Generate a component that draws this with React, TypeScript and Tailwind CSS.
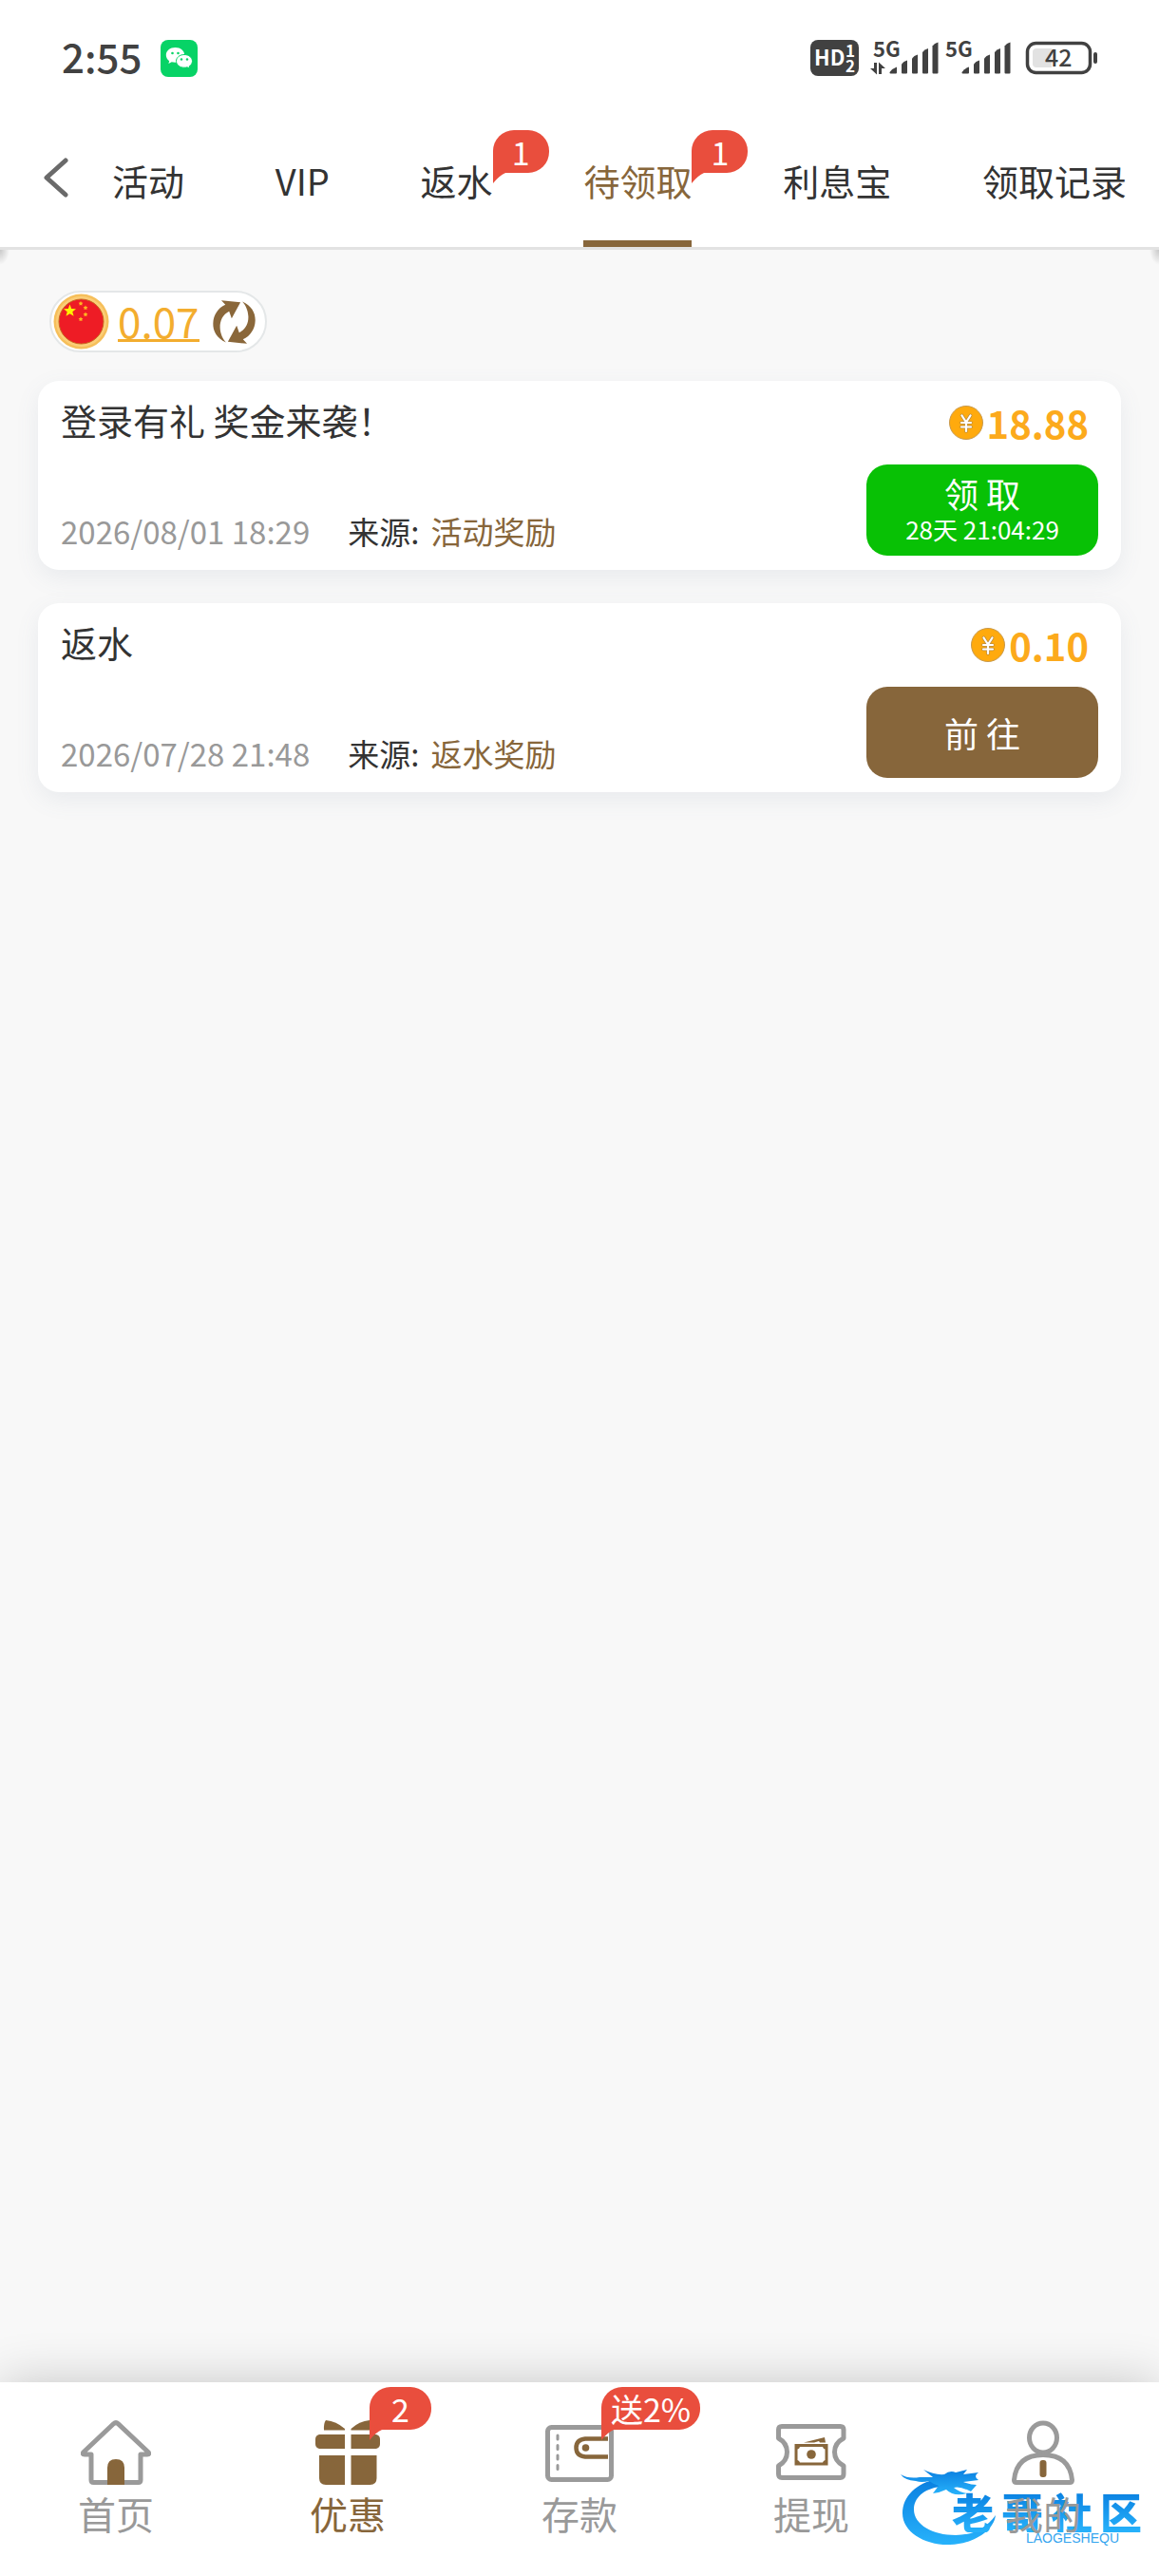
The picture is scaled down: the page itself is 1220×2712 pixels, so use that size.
import { FC, ReactNode } from "react";

interface BubbleProps {
  label: string;
  className: string;
}

// Red count bubble with a small tail at its lower left corner
const Bubble: FC<BubbleProps> = ({ label, className }) => (
  <span
    className={`absolute z-10 flex h-[45px] items-center justify-center rounded-[22px] rounded-bl-none bg-[#e94e3d] text-[34px] leading-[44px] font-normal whitespace-nowrap text-white ${className}`}
  >
    {label}
    <svg
      viewBox="0 0 16 12"
      className="absolute top-full left-0 h-3 w-4"
      aria-hidden="true"
    >
      <path d="M0 -1H16Q8 1 0 11Z" fill="#e94e3d" />
    </svg>
  </span>
);

const WechatIcon = () => (
  <svg viewBox="0 0 39 39" className="h-[39px] w-[39px]" aria-hidden="true">
    <rect width="39" height="39" rx="8" fill="#07d366" />
    <path
      d="M15.500 8C10 8 5.800 11.500 5.800 16c0 2.500 1.300 4.700 3.400 6.200L8.400 25l3.300-1.700c1.200.3 2.500.5 3.800.5 5.400 0 9.700-3.500 9.700-7.900S21 8 15.500 8Z"
      fill="#fff"
    />
    <path
      d="M25 15.500c-4.800 0-8.500 3-8.500 6.900s3.700 6.800 8.500 6.800c1.100 0 2.100-.1 3.100-.4l2.700 1.500-.7-2.400c2.100-1.300 3.400-3.300 3.400-5.500 0-3.900-3.800-6.900-8.500-6.900Z"
      fill="#fff"
      stroke="#07d366"
      strokeWidth="1"
    />
    <g fill="#07d366">
      <circle cx="12.500" cy="14" r="1.300" />
      <circle cx="18.500" cy="14" r="1.300" />
      <circle cx="22" cy="20.500" r="1.200" />
      <circle cx="28" cy="20.500" r="1.200" />
    </g>
  </svg>
);

const HdIcon = () => (
  <svg
    viewBox="0 0 51 38"
    className="h-[38px] w-[51px] overflow-visible font-['Noto_Sans_CJK_SC',sans-serif]"
    aria-hidden="true"
  >
    <rect width="51" height="38" rx="8" fill="#414141" />
    <g fill="#fff" fontWeight="700">
      <text x="4" y="27" fontSize="22">
        HD
      </text>
      <text x="37" y="18" fontSize="17">
        1
      </text>
      <text x="37" y="34" fontSize="17">
        2
      </text>
    </g>
  </svg>
);

const SignalIcon: FC<{ arrows?: boolean }> = ({ arrows }) => (
  <svg
    viewBox="0 0 72 38"
    className="h-[38px] w-[72px] overflow-visible font-['Noto_Sans_CJK_SC',sans-serif]"
    fill="#414141"
    aria-hidden="true"
  >
    <text x="3" y="18" fontSize="22" fontWeight="700">
      5G
    </text>
    {arrows && <path d="M4 24v6H0l7 6.500V24ZM9 36V23.500l7 6.500h-4v6Z" />}
    <path d="M20.500 34q3-4 7.500-5.500V34.500q0 1-1 1h-5.500q-1 0-1-1Z" />
    <path d="M33 25.500q2-3 6-4v13q0 1-1 1h-4q-1 0-1-1Z" />
    <path d="M44 19.500q2-3 6-4v19q0 1-1 1h-4q-1 0-1-1Z" />
    <path d="M55 13q2-3 6-4v25.500q0 1-1 1h-4q-1 0-1-1Z" />
    <path d="M65.500 6.500q2-3 6-4v32q0 1-1 1h-4q-1 0-1-1Z" />
  </svg>
);

const BatteryIcon = () => (
  <svg
    viewBox="0 0 76 34"
    className="h-[34px] w-[76px] overflow-visible font-['Noto_Sans_CJK_SC',sans-serif]"
    aria-hidden="true"
  >
    <rect
      x="1.500"
      y="1.500"
      width="66"
      height="31"
      rx="9"
      fill="#fff"
      stroke="#414141"
      strokeWidth="3.500"
    />
    <path d="M11 7h16v20H11q-4 0-4-4V11q0-4 4-4Z" fill="#e2e2e2" />
    <rect x="71" y="11" width="4" height="12" rx="2" fill="#414141" />
    <text x="20" y="26" fontSize="25" fontWeight="500" fill="#414141">
      42
    </text>
  </svg>
);

const FlagIcon = () => (
  <svg viewBox="0 0 59 59" className="h-[59px] w-[59px]" aria-hidden="true">
    <circle cx="29.500" cy="29.500" r="29" fill="#f6bf5a" />
    <circle cx="29.500" cy="29.500" r="26.500" fill="#fbce78" />
    <circle
      cx="29.500"
      cy="29.500"
      r="23.500"
      fill="#ee1c25"
      stroke="#c9671f"
      strokeWidth="1"
    />
    <path
      d="M17.500 11.500l1.700 4.400 4.800.3-3.700 3 1.300 4.600-4.100-2.600-4 2.600 1.200-4.600-3.700-3 4.800-.3Z"
      fill="#fff200"
    />
    <g fill="#ffb920">
      <path d="M29 8l.8 1.400 1.600.3-1.100 1.200.2 1.700-1.500-.7-1.500.7.200-1.700-1.100-1.200 1.600-.3Z" />
      <path d="M34 12.500l.8 1.400 1.600.3-1.100 1.200.2 1.700-1.500-.7-1.500.7.200-1.700-1.100-1.200 1.600-.3Z" />
      <path d="M34 19.500l.8 1.400 1.600.3-1.100 1.200.2 1.700-1.500-.7-1.500.7.200-1.700-1.100-1.200 1.600-.3Z" />
      <path d="M29 24.500l.8 1.400 1.600.3-1.100 1.200.2 1.700-1.500-.7-1.500.7.200-1.700-1.100-1.200 1.600-.3Z" />
    </g>
  </svg>
);

const RefreshIcon = () => (
  <svg
    viewBox="0 0 136 144"
    className="h-12 w-[45px]"
    fill="#8a673a"
    aria-hidden="true"
  >
    <path d="M42 137C12 124 0 100 1 76C2 50 16 28 40 17L27 3L88 9L60 61L52 38C32 48 22 68 23 90C24 110 32 126 42 137Z" />
    <path d="M94 7C124 20 136 44 135 68C134 94 120 116 96 127L109 141L48 135L76 83L84 106C104 96 114 76 113 54C112 34 104 18 94 7Z" />
  </svg>
);

const CoinIcon = () => (
  <svg
    viewBox="0 0 36 36"
    className="h-9 w-9"
    aria-hidden="true"
    fill="none"
    strokeLinecap="round"
  >
    <circle cx="18" cy="18" r="17.500" fill="#ffaa0d" stroke="#c7994e" />
    <path
      d="M13.500 10.500L18 17.500L22.500 10.500M18 17.500V27M13 18H23M13 22.500H23"
      stroke="#b98a3e"
      strokeWidth="3.600"
    />
    <path
      d="M13.500 10.500L18 17.500L22.500 10.500M18 17.500V27M13 18H23M13 22.500H23"
      stroke="#fff"
      strokeWidth="2.200"
    />
  </svg>
);

const HomeIcon = () => (
  <svg viewBox="0 0 74 68" className="h-[68px] w-[74px]" aria-hidden="true">
    <path
      d="M34.500 3.800Q37 1.500 39.500 3.800L71 33.500Q73 36 70 36H63V63Q63 65.500 60.500 65.500H13.500Q11 65.500 11 63V36H4Q1 36 3 33.500Z"
      fill="#fff"
      stroke="#9a9a9a"
      strokeWidth="5"
      strokeLinejoin="round"
    />
    <path d="M28 68V50Q28 41 37 41T46 50V68Z" fill="#87663b" />
  </svg>
);

const GiftIcon = () => (
  <svg
    viewBox="0 0 68 68"
    className="h-[68px] w-[68px]"
    fill="#87663b"
    aria-hidden="true"
  >
    <path d="M9 10.500Q8.500 3 11 0Q22 1 31 9V10.500Z" />
    <path d="M59 10.500Q59.500 3 57 0Q46 1 37.500 9V10.500Z" />
    <path d="M4 15H31V30H4Q0 29 0 25V20Q0 16 4 15Z" />
    <path d="M37.500 15H64Q68 16 68 20V25Q68 29 64 30H37.500Z" />
    <path d="M4 37H31V68H11Q4 68 4 61Z" />
    <path d="M37.500 37H64.500V61Q64.500 68 57.500 68H37.500Z" />
  </svg>
);

const WalletIcon = () => (
  <svg
    viewBox="0 0 72 68"
    className="h-[68px] w-[72px]"
    fill="none"
    aria-hidden="true"
  >
    <rect
      x="2.500"
      y="7.500"
      width="67"
      height="55"
      rx="4"
      stroke="#9a9a9a"
      strokeWidth="5"
    />
    <path
      d="M13 16V20M13 26.500V30.500M13 37V41M13 47.500V51.500"
      stroke="#9a9a9a"
      strokeWidth="3"
      strokeLinecap="round"
    />
    <path
      d="M66 19.500H42Q32.500 20.500 32.500 29T42 38.500H66"
      stroke="#87663b"
      strokeWidth="4.500"
    />
    <circle cx="42.500" cy="29" r="3.800" fill="#87663b" />
  </svg>
);

const TicketIcon = () => (
  <svg
    viewBox="0 0 74 68"
    className="h-[68px] w-[74px]"
    fill="none"
    aria-hidden="true"
  >
    <path
      d="M2.500 19V10Q2.500 6.500 6 6.500H67.500Q71 6.500 71 10V19Q61.500 24 61.500 33.500T71 48V56.500Q71 60.500 67.500 60.500H6Q2.500 60.500 2.500 56.500V48Q11.500 43 11.500 33.500T2.500 19Z"
      stroke="#9a9a9a"
      strokeWidth="5"
      strokeLinejoin="round"
    />
    <path d="M29 23.500L51 18L52 23.500H46L45 22L40 23.500Z" fill="#87663b" />
    <path
      fillRule="evenodd"
      d="M19.500 25H54.500V47.500H19.500ZM25 28Q24.500 30 22.500 30.500V42Q24.500 42.500 25 44.500H49Q49.500 42.500 51.500 42V30.500Q49.500 30 49 28Z"
      fill="#87663b"
    />
    <circle cx="37" cy="36" r="4.800" fill="#87663b" />
  </svg>
);

const UserIcon = () => (
  <svg
    viewBox="0 0 66 68"
    className="h-[68px] w-[66px]"
    fill="none"
    aria-hidden="true"
  >
    <ellipse
      cx="33"
      cy="18.500"
      rx="14.500"
      ry="15.500"
      stroke="#9a9a9a"
      strokeWidth="5"
    />
    <path
      d="M5 65.500Q2.500 65.500 2.500 63Q5 36.500 33 36.500T63.500 63Q63.500 65.500 61 65.500Z"
      stroke="#9a9a9a"
      strokeWidth="5"
      strokeLinejoin="round"
    />
    <rect x="29.500" y="42" width="7" height="18" rx="3" fill="#87663b" />
  </svg>
);

const DragonMark = () => (
  <svg
    viewBox="0 0 104 86"
    className="absolute top-0 left-0 h-[86px] w-[104px]"
    aria-hidden="true"
  >
    <defs>
      <linearGradient id="dragon" x1="0" y1="0" x2="0" y2="1">
        <stop offset="0" stopColor="#0a7fe0" />
        <stop offset="1" stopColor="#27b2fb" />
      </linearGradient>
    </defs>
    <g fill="url(#dragon)">
      <path d="M38 14C17 18 2 32 2 50C2 70 26 84 52 83C78 82 98 68 100 52C90 66 76 73 58 73C34 73 14 62 14 46C14 34 24 24 42 22Z" />
      <path d="M0 9Q8 14 20 12L34 12L24 4Q36 10 46 9Q52 4 58 7L70 4L66 9L82 7Q76 11 82 15L66 17Q74 20 80 20L74 27Q62 21 56 23Q62 28 70 29Q56 33 48 25Q42 28 34 29L40 21Q34 19 30 16Q22 18 16 16Q4 15 0 9Z" />
    </g>
  </svg>
);

// Community logo, lies behind the icons and labels of the bottom bar
const Watermark = () => (
  <div className="absolute top-[88px] right-[18px] h-[90px] w-[254px]">
    <DragonMark />
    <div className="relative flex flex-col items-end pt-[26px]">
      <span className="flex gap-2 text-[44px] leading-[44px] font-black">
        {["老", "哥", "社", "区"].map((char) => (
          <span
            key={char}
            className="bg-gradient-to-b from-[#0a7fe0] to-[#27b2fb] bg-clip-text text-transparent"
          >
            {char}
          </span>
        ))}
      </span>
      <span className="pr-6 font-['Liberation_Sans',sans-serif] text-sm leading-3 text-[#35a5ef]">
        LAOGESHEQU
      </span>
    </div>
  </div>
);

const tabs = [
  { label: "活动" },
  { label: "VIP" },
  { label: "返水", count: "1" },
  { label: "待领取", count: "1", active: true },
  { label: "利息宝" },
  { label: "领取记录" },
];

const rewards = [
  {
    title: "登录有礼 奖金来袭！",
    time: "2026/08/01 18:29",
    source: "活动奖励",
    amount: "18.88",
    action: "领 取",
    countdown: "28天 21:04:29",
  },
  {
    title: "返水",
    time: "2026/07/28 21:48",
    source: "返水奖励",
    amount: "0.10",
    action: "前 往",
  },
];

interface NavItem {
  label: string;
  icon: ReactNode;
  active?: boolean;
  bubble?: string;
}

const navItems: NavItem[] = [
  { label: "首页", icon: <HomeIcon /> },
  { label: "优惠", icon: <GiftIcon />, active: true, bubble: "2" },
  { label: "存款", icon: <WalletIcon />, bubble: "送2%" },
  { label: "提现", icon: <TicketIcon /> },
  { label: "我的", icon: <UserIcon /> },
];

const StatusBar = () => (
  <div className="flex h-[122px] items-center justify-between pr-16 pl-[65px]">
    <div className="flex items-center gap-5">
      <span className="pb-1 text-[42px] leading-[42px] font-medium text-[#414141]">
        2:55
      </span>
      <WechatIcon />
    </div>
    <div className="flex items-center">
      <HdIcon />
      <div className="ml-3 flex gap-1">
        <SignalIcon arrows />
        <SignalIcon />
      </div>
      <div className="ml-4">
        <BatteryIcon />
      </div>
    </div>
  </div>
);

const TabBar = () => (
  <div className="flex h-[138px] items-stretch pr-[34px] pl-[34px]">
    <button type="button" aria-label="返回" className="w-[84px] pb-2 pl-3">
      <svg viewBox="0 0 26 42" className="h-[42px] w-[26px]" fill="none">
        <path
          d="M23 3L3 21L23 39"
          stroke="#6a6a6a"
          strokeWidth="5"
          strokeLinecap="round"
          strokeLinejoin="round"
        />
      </svg>
    </button>
    <nav className="flex flex-1 justify-between">
      {tabs.map((tab) => (
        <a
          key={tab.label}
          href="#"
          className={`relative flex items-center border-b-[7px] pt-1 text-[38px] whitespace-nowrap ${
            tab.active
              ? "border-b-[#87663b] text-[#87663b]"
              : "border-b-transparent text-[#333]"
          }`}
        >
          {tab.label}
          {tab.count && (
            <Bubble
              label={tab.count}
              className="top-[15px] left-full w-[59px]"
            />
          )}
        </a>
      ))}
    </nav>
  </div>
);

const RewardCard: FC<{ reward: (typeof rewards)[number] }> = ({ reward }) => (
  <li className="flex justify-between rounded-[22px] bg-white px-6 pt-5 pb-[15px] shadow-[0_8px_24px_rgba(100,120,150,0.1)]">
    <div className="flex flex-col justify-between">
      <h2 className="text-[38px] leading-[42px] text-[#333]">{reward.title}</h2>
      <p className="mb-1 flex items-center text-[33px] leading-[44px]">
        <time className="mr-10 text-[#999]">{reward.time}</time>
        <span className="mr-3 text-[#333]">来源:</span>
        <span className="text-[#87663b]">{reward.source}</span>
      </p>
    </div>
    <div className="flex flex-col">
      <div className="flex h-12 items-center justify-end gap-1 pr-[10px]">
        <CoinIcon />
        <span className="text-[40px] leading-[46px] font-bold text-[#fcaa1c]">
          {reward.amount}
        </span>
      </div>
      <button
        type="button"
        className={`mt-5 flex h-24 w-[244px] flex-col items-center justify-center rounded-[22px] text-white ${
          reward.countdown ? "bg-[#08c105]" : "bg-[#87663b]"
        }`}
      >
        <span className="text-[36px] leading-[40px]">{reward.action}</span>
        {reward.countdown && (
          <span className="text-[26px] leading-[36px]">{reward.countdown}</span>
        )}
      </button>
    </div>
  </li>
);

const BottomNav = () => (
  <nav className="relative flex bg-white shadow-[0_0_50px_rgba(0,0,0,0.2)]">
    <Watermark />
    {navItems.map((item) => (
      <a
        key={item.label}
        href="#"
        className={`relative flex flex-1 flex-col items-center gap-2 pt-10 pb-11 text-[40px] leading-[44px] ${
          item.active ? "text-[#87663b]" : "text-[#999]"
        }`}
      >
        {item.icon}
        {item.label}
        {item.bubble && (
          <Bubble
            label={item.bubble}
            className="top-[5px] left-1/2 ml-[23px] min-w-[65px] px-[10px]"
          />
        )}
      </a>
    ))}
  </nav>
);

export default function App() {
  return (
    <div className="flex min-h-screen flex-col overflow-hidden bg-[#f8f8f8] font-['Noto_Sans_CJK_SC',sans-serif]">
      <header className="relative border-b-[3px] border-[#e2e2e2] bg-white">
        <StatusBar />
        <TabBar />
        <span className="absolute top-full left-0 mt-[3px] h-4 w-[10px] bg-[radial-gradient(ellipse_at_top_left,#c8c8c8,transparent_70%)]" />
        <span className="absolute top-full right-0 mt-[3px] h-4 w-[10px] bg-[radial-gradient(ellipse_at_top_right,#c8c8c8,transparent_70%)]" />
      </header>
      <main className="flex-1 px-10 pt-[43px] pb-10">
        <div className="ml-3 flex h-[65px] w-fit items-center rounded-full border-2 border-[#e4e7e8] bg-white pr-[10px] pl-[2px]">
          <FlagIcon />
          <a
            href="#"
            className="mr-[14px] ml-[9px] border-b-[3px] border-[#f3ad2e] text-[44px] leading-[40px] text-[#f3ad2e]"
          >
            0.07
          </a>
          <button type="button" aria-label="刷新">
            <RefreshIcon />
          </button>
        </div>
        <ul className="mt-[30px] flex flex-col gap-[35px]">
          {rewards.map((reward) => (
            <RewardCard key={reward.time} reward={reward} />
          ))}
        </ul>
      </main>
      <BottomNav />
    </div>
  );
}
